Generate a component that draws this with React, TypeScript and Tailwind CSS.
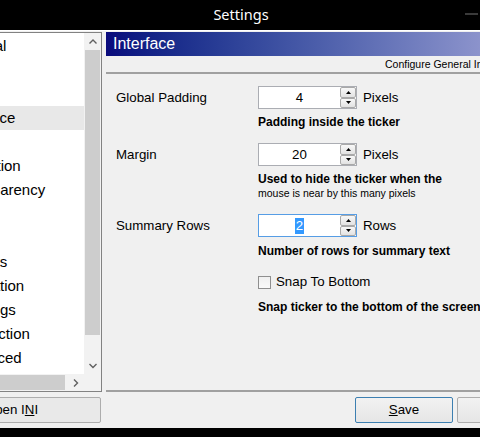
import React from 'react';

type Item = { label: string; pad: string; selected?: boolean };

// list is partly off the left edge of the screen, so each label is nudged to land where the shot has it
const items: Item[] = [
  { label: 'General', pad: 'pl-[32px]' },
  { label: 'Fonts', pad: 'pl-[34px]' },
  { label: 'Data', pad: 'pl-[34px]' },
  { label: 'Interface', pad: 'pl-[36px]', selected: true },
  { label: 'Links', pad: 'pl-[34px]' },
  { label: 'Animation', pad: 'pl-[33px]' },
  { label: 'Transparency', pad: 'pl-[33px]' },
  { label: 'Rules', pad: 'pl-[34px]' },
  { label: 'Proxy', pad: 'pl-[34px]' },
  { label: 'Hotkeys', pad: 'pl-[32px]' },
  { label: 'Notification', pad: 'pl-[29px]' },
  { label: 'Warnings', pad: 'pl-[32px]' },
  { label: 'Connection', pad: 'pl-[33px]' },
  { label: 'Advanced', pad: 'pl-[34px]' },
];

const Chevron = ({ dir }: { dir: 'up' | 'down' | 'right' }) => {
  const d =
    dir === 'up' ? 'M0.5 4.5 L4 1 L7.5 4.5' : dir === 'down' ? 'M0.5 1 L4 4.5 L7.5 1' : 'M1 0.5 L4.5 4 L1 7.5';
  const w = dir === 'right' ? 6 : 8;
  const h = dir === 'right' ? 8 : 6;
  return (
    <svg width={w} height={h} viewBox={`0 0 ${w} ${h}`}>
      <path d={d} stroke="#606060" strokeWidth="1.4" fill="none" />
    </svg>
  );
};

const Tri = ({ up }: { up?: boolean }) => (
  <svg width="5" height="3" viewBox="0 0 5 3">
    <path d={up ? 'M0 3 L2.5 0 L5 3Z' : 'M0 0 L2.5 3 L5 0Z'} fill="#000" />
  </svg>
);

const Spinner = ({ value, focused }: { value: string; focused?: boolean }) => (
  <div
    className={`flex h-[23px] w-[99px] border bg-white ${focused ? 'border-[#569de5]' : 'border-[#abadb3]'}`}
  >
    <div className="flex flex-1 items-center justify-center text-[13.3px] text-black">
      {focused ? <span className="bg-[#3399ff] px-[1px] leading-[16px] text-white">{value}</span> : value}
    </div>
    <div className="flex w-[16px] flex-col">
      <div className="flex flex-1 items-center justify-center rounded-[2px] border border-[#a9a9a9] bg-linear-to-b from-[#f8f8f8] to-[#e2e2e2]">
        <Tri up />
      </div>
      <div className="flex flex-1 items-center justify-center rounded-[2px] border border-[#a9a9a9] bg-linear-to-b from-[#f8f8f8] to-[#e2e2e2]">
        <Tri />
      </div>
    </div>
  </div>
);

const Row = ({ label, value, unit, focused }: { label: string; value: string; unit: string; focused?: boolean }) => (
  <div className="flex items-center">
    <div className="w-[142px] text-[13.3px] text-black">{label}</div>
    <Spinner value={value} focused={focused} />
    <span className="ml-[6px] text-[13.3px] text-black">{unit}</span>
  </div>
);

export default function App() {
  return (
    <div className="relative h-[437px] w-[480px] overflow-hidden bg-black font-['Liberation_Sans',Arial,sans-serif]">
      <div className="-ml-[80px] flex h-full w-[642px] flex-col">
        {/* title bar */}
        <div className="flex h-[30px] items-center justify-center bg-black font-['Noto_Sans',sans-serif] text-[14.5px] text-white">
          Settings
        </div>

        <div className="flex h-[398px] flex-col border-t border-white bg-[#f0f0f0] pt-[1px]">
          <div className="flex h-[360px] gap-[4px]">
            {/* category list */}
            <div className="flex w-[182px] flex-col border border-[#828282] bg-white">
              <div className="flex flex-1 overflow-hidden">
                <div className="flex-1 overflow-hidden pt-[1px]">
                  {items.map((it) => (
                    <div
                      key={it.label}
                      className={`flex h-[24px] items-center whitespace-nowrap text-[15px] text-black ${it.pad} ${
                        it.selected ? 'bg-[#e8e8e8]' : ''
                      }`}
                    >
                      {it.label}
                    </div>
                  ))}
                </div>
                <div className="flex w-[17px] flex-col bg-[#f2f2f2]">
                  <div className="flex h-[17px] items-center justify-center">
                    <Chevron dir="up" />
                  </div>
                  <div className="mx-[1px] h-[285px] bg-[#cdcdcd]" />
                  <div className="flex-1" />
                  <div className="flex h-[17px] items-center justify-center">
                    <Chevron dir="down" />
                  </div>
                </div>
              </div>
              <div className="flex h-[17px]">
                <div className="flex flex-1 bg-[#f2f2f2]">
                  <div className="w-[17px]" />
                  <div className="my-[1px] w-[127px] bg-[#cdcdcd]" />
                  <div className="flex-1" />
                  <div className="flex w-[17px] items-center justify-center">
                    <Chevron dir="right" />
                  </div>
                </div>
                <div className="w-[17px] bg-[#f2f2f2]" />
              </div>
            </div>

            {/* settings panel */}
            <div className="flex flex-1 flex-col">
              <div className="flex h-[24px] items-center bg-linear-to-r from-[#0a0a7c] to-[#aeaedc] pl-[7px] text-[16px] text-white">
                Interface
              </div>
              <div className="flex h-[16px] items-center whitespace-nowrap pl-[279px] pt-[2px] text-[10.5px] text-black">
                Configure General Interface Settings
              </div>
              <div className="h-[2px] bg-[#a0a0a0]" />

              <div className="flex flex-1 flex-col pl-[10px]">
                <div className="mt-[12px]">
                  <Row label="Global Padding" value="4" unit="Pixels" />
                </div>
                <div className="mt-[6px] pl-[142px] text-[12px] font-bold leading-[14px] text-black">
                  Padding inside the ticker
                </div>

                <div className="mt-[14px]">
                  <Row label="Margin" value="20" unit="Pixels" />
                </div>
                <div className="mt-[6px] pl-[142px] text-black">
                  <div className="text-[12px] font-bold leading-[14px]">Used to hide the ticker when the</div>
                  <div className="text-[10.5px] leading-[14px]">mouse is near by this many pixels</div>
                </div>

                <div className="mt-[14px]">
                  <Row label="Summary Rows" value="2" unit="Rows" focused />
                </div>
                <div className="mt-[7px] pl-[142px] text-[12px] font-bold leading-[14px] text-black">
                  Number of rows for summary text
                </div>

                <div className="mt-[17px] flex h-[14px] items-center pl-[142px]">
                  <div className="h-[13px] w-[13px] border border-[#8f8f8f] bg-linear-to-b from-[#f0f0f0] to-[#fafafa]" />
                  <span className="ml-[5px] text-[13.3px] text-black">Snap To Bottom</span>
                </div>
                <div className="mt-[11px] whitespace-nowrap pl-[142px] text-[12px] font-bold leading-[14px] text-black">
                  Snap ticker to the bottom of the screen
                </div>
              </div>
              <div className="h-[2px] bg-[#a0a0a0]" />
            </div>
          </div>

          {/* buttons */}
          <div className="mt-[5px] flex h-[26px]">
            <button className="ml-[2px] w-[179px] rounded-[2px] border border-[#adadad] bg-[#e9e9e9] text-[13.3px] text-black">
              Open I<span className="underline">N</span>I
            </button>
            <button className="ml-auto w-[98px] rounded-[2px] border border-[#3c7fb1] bg-linear-to-b from-[#f2f2f2] to-[#e6e6e6] text-[13.3px] text-black">
              <span className="underline">S</span>ave
            </button>
            <button className="ml-[4px] mr-[7px] w-[98px] rounded-[2px] border border-[#adadad] bg-linear-to-b from-[#f2f2f2] to-[#e6e6e6] text-[13.3px] text-black">
              <span className="underline">C</span>ancel
            </button>
          </div>
        </div>

        <div className="flex-1 bg-black" />
      </div>
      <div className="absolute left-[465px] top-[13px] h-[2px] w-[13px] bg-[#3a3a3a]" />
    </div>
  );
}
